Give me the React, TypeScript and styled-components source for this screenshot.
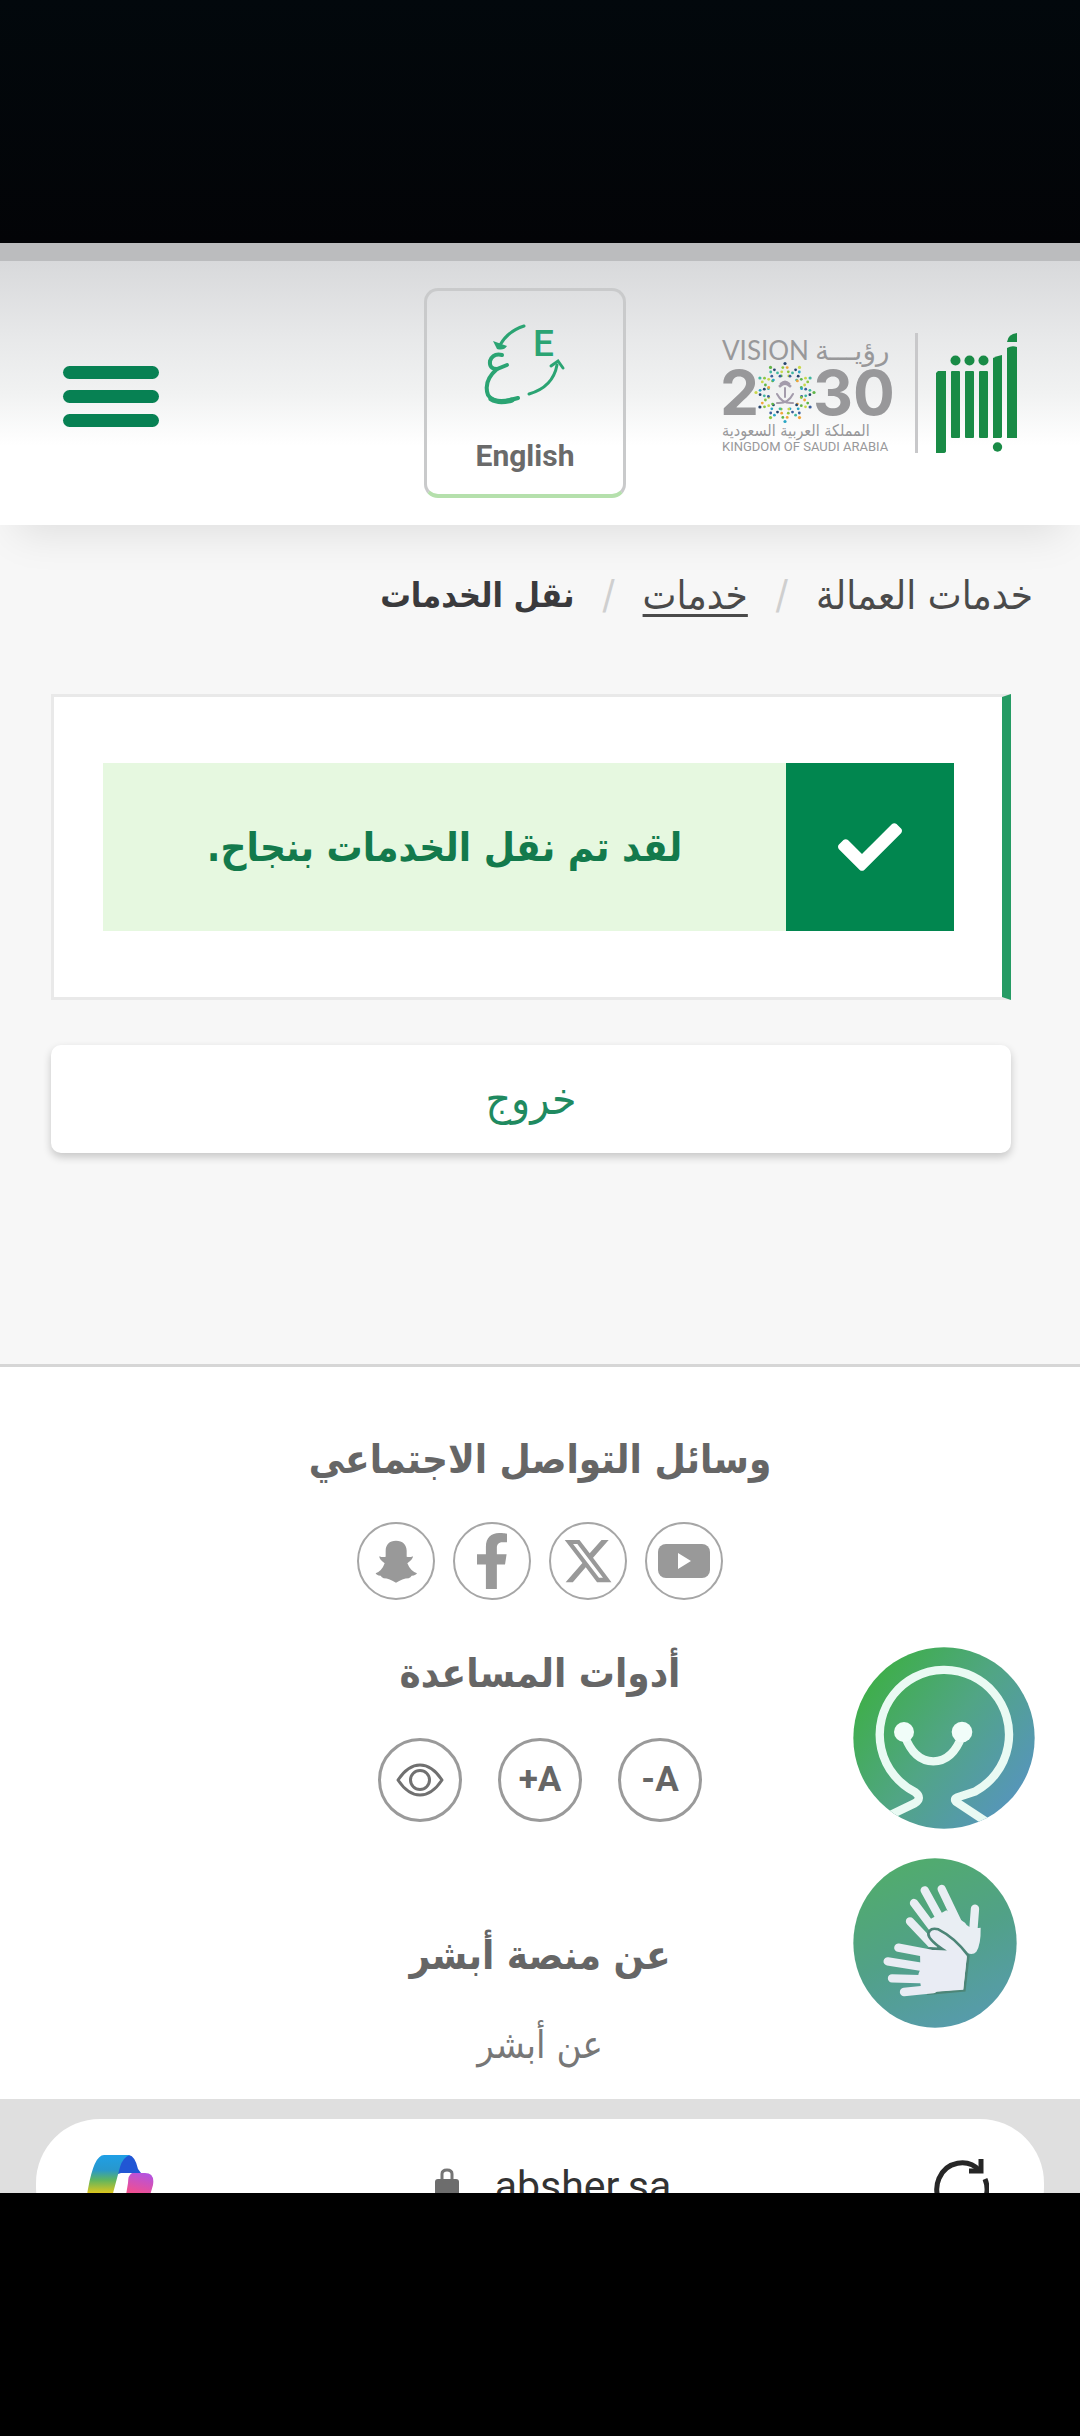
import React from "react";
import styled, { createGlobalStyle } from "styled-components";
import { FaCheck, FaFacebookF } from "react-icons/fa";
import { FaXTwitter } from "react-icons/fa6";

const GlobalStyle = createGlobalStyle`
  *, *::before, *::after { box-sizing: border-box; }
  html, body, #root { height: 100%; }
  body {
    margin: 0;
    background: #000;
    font-family: "DejaVu Sans Condensed", "DejaVu Sans", "Noto Sans", sans-serif;
  }
  button { font: inherit; color: inherit; background: none; border: 0; padding: 0; cursor: pointer; }
  a { color: inherit; text-decoration: none; }
  svg { display: block; }
`;

const Screen = styled.div`
  min-height: 100%;
  display: flex;
  flex-direction: column;
`;

const TopArea = styled.div`
  height: 243px;
  background: linear-gradient(#02080c, #030407);
`;

const StatusStrip = styled.div`
  height: 18px;
  background: #bbbcbe;
`;

const Header = styled.header`
  position: relative;
  display: grid;
  grid-template-columns: 1fr auto 1fr;
  align-items: center;
  height: 264px;
  padding: 0 61px 0 31px;
  background: linear-gradient(#d8d9db, #e8e9ea 30%, #f1f2f2 50%, #fff 70%);
  box-shadow: 0 24px 40px -16px rgba(0, 0, 0, 0.1);
`;

const Logos = styled.div`
  direction: rtl;
  justify-self: end;
  display: flex;
  align-items: center;
  gap: 17px;
`;

const Divider = styled.span`
  width: 3px;
  height: 120px;
  background: #c8c8ca;
`;

const LanguageButton = styled.button`
  display: flex;
  flex-direction: column;
  align-items: center;
  gap: 32px;
  width: 202px;
  height: 210px;
  padding-top: 32px;
  border: 3px solid #c9cacb;
  border-bottom: 4px solid #b5e0ac;
  border-radius: 14px;
  font: 700 30px/34px Roboto, sans-serif;
  color: #6a6a6a;
`;

const MenuButton = styled.button`
  justify-self: start;
  display: flex;
  flex-direction: column;
  gap: 11px;
  padding: 38px 32px 32px;
`;

const MenuBar = styled.span`
  width: 96px;
  height: 13px;
  border-radius: 7px;
  background: #078153;
`;

const Main = styled.main`
  flex: none;
  padding: 40px 69px 211px 51px;
  background: #f7f7f7;
`;

const Breadcrumb = styled.nav`
  display: flex;
  align-items: center;
  gap: 28px;
  height: 60px;
  margin: 0 -22px 69px 0;
  font-size: 40px;
  line-height: 60px;
  color: #4a4a4a;
`;

const CrumbLink = styled.a<{ $underlined?: boolean }>`
  text-decoration: ${(p) => (p.$underlined ? "underline" : "none")};
  text-decoration-thickness: 3px;
  text-underline-offset: 5px;
`;

const CrumbCurrent = styled.strong`
  font-size: 34px;
  color: #3a3a3c;
`;

const Slash = styled.span`
  color: #cfcfcf;
`;

const Card = styled.section`
  padding: 66px 48px 66px 49px;
  background: #fff;
  border: 3px solid #e9e9e9;
  border-right: 9px solid #259b64;
`;

const Notice = styled.div`
  display: flex;
  min-height: 168px;
  background: #e6f8e0;
`;

const NoticeIcon = styled.span`
  display: grid;
  place-items: center;
  width: 168px;
  background: #01864f;
  color: #fff;
`;

const NoticeText = styled.p`
  flex: 1;
  align-self: center;
  margin: 0;
  text-align: center;
  font-size: 40px;
  font-weight: 700;
  line-height: 60px;
  color: #137a4c;
`;

const ExitButton = styled.button`
  display: block;
  width: 100%;
  height: 108px;
  margin-top: 45px;
  border-radius: 10px;
  background: #fff;
  box-shadow: 0 4px 8px rgba(0, 0, 0, 0.2);
  font-size: 44px;
  line-height: 60px;
  color: #1f8a60;
`;

const Footer = styled.footer`
  position: relative;
  display: flex;
  flex-direction: column;
  align-items: center;
  height: 735px;
  padding-top: 62px;
  border-top: 3px solid #d6d6d6;
  background: #fff;
`;

const FooterTitle = styled.h2`
  margin: 0;
  font-size: 40px;
  font-weight: 700;
  line-height: 60px;
  color: #666;
`;

const Row = styled.div<{ $gap: number; $space: string }>`
  display: flex;
  gap: ${(p) => p.$gap}px;
  margin: ${(p) => p.$space};
`;

const SocialLink = styled.a`
  display: grid;
  place-items: center;
  width: 78px;
  height: 78px;
  border: 2px solid #a6a6a6;
  border-radius: 50%;
  color: #999;
`;

const ToolButton = styled.button`
  display: grid;
  place-items: center;
  width: 84px;
  height: 84px;
  border: 3px solid #9a9a9a;
  border-radius: 50%;
  font: 700 35px/40px Roboto, sans-serif;
  direction: ltr;
  color: #666;
`;

const FooterLink = styled.a`
  margin-top: 30px;
  font-size: 38px;
  line-height: 60px;
  color: #777;
`;

const FloatingTools = styled.aside`
  position: absolute;
  top: 280px;
  right: 45px;
  direction: ltr;
  display: flex;
  flex-direction: column;
  align-items: flex-start;
  gap: 29px;
`;

const BrowserBar = styled.div`
  direction: ltr;
  flex: none;
  height: 94px;
  padding: 20px 36px 0;
  overflow: hidden;
  background: #dfdfdf;
`;

const AddressPill = styled.div`
  display: flex;
  align-items: flex-start;
  justify-content: space-between;
  height: 132px;
  padding: 36px 55px 0 51px;
  border-radius: 64px;
  background: #fff;
`;

const Address = styled.button`
  display: flex;
  align-items: center;
  gap: 36px;
  margin-left: 18px;
  padding-top: 7px;
  font: 400 41px/48px Roboto, sans-serif;
  color: #333;
`;

const BottomArea = styled.div`
  flex: 1;
  background: #000;
`;

const EMBLEM_COLORS = ["#5fb548", "#2aa6c4", "#c8d84a", "#3b5f9c", "#8bc53f", "#3fb7a0", "#f0a63a", "#26456e"];

function Emblem() {
  const dots: React.ReactNode[] = [];
  for (let arm = 0; arm < 12; arm++) {
    for (let step = 0; step < 4; step++) {
      for (const side of step === 3 ? [0] : [-1, 1]) {
        const angle = ((arm * 30 + side * (13 - step * 4)) * Math.PI) / 180;
        const radius = 17 + step * 4;
        dots.push(
          <circle
            key={`${arm}-${step}-${side}`}
            cx={Math.round((85 + Math.sin(angle) * radius) * 10) / 10}
            cy={Math.round((92.5 - Math.cos(angle) * radius) * 10) / 10}
            r={step === 3 ? 1.6 : 1.4}
            fill={EMBLEM_COLORS[(arm * 3 + step * 2 + side + 1) % EMBLEM_COLORS.length]}
          />
        );
      }
    }
  }
  return (
    <g>
      {dots}
      <g stroke="#a39bab" strokeWidth="2" fill="none" strokeLinecap="round">
        <path d="M85 88V97M77 94Q82 104 93 103M93 94Q88 104 77 103" />
        <path d="M80 86Q85 81 90 86M81 84Q85 80 89 84" strokeWidth="3" />
      </g>
    </g>
  );
}

function VisionLogo() {
  return (
    <svg width="178" height="126" viewBox="20 30 178 126" role="img" aria-label="Vision 2030" direction="ltr">
      <g fill="#98989a">
        <text x="22" y="60" fontFamily="Lato, sans-serif" fontSize="26">VISION</text>
        <text x="115" y="60" fontFamily="DejaVu Sans, sans-serif" fontSize="28">رؤيـــة</text>
        <g fontFamily="Inter, sans-serif" fontWeight="700" fontSize="62">
          <text x="20" y="115">2</text>
          <text x="113" y="115">3</text>
          <text x="153" y="115">0</text>
        </g>
        <text x="22" y="136" fontFamily="DejaVu Sans Condensed, DejaVu Sans, sans-serif" fontSize="16">المملكة العربية السعودية</text>
        <text x="22" y="151" fontFamily="Roboto, sans-serif" fontSize="13">KINGDOM OF SAUDI ARABIA</text>
      </g>
      <Emblem />
    </svg>
  );
}

function AbsherLogo() {
  return (
    <svg width="84" height="124" viewBox="235 31 84 124" fill="#198b46" role="img" aria-label="أبشر">
      <path d="M238 71H246V151Q246 153 243 153H236V73Z" />
      <rect x="251" y="71" width="9" height="67" rx="1" />
      <rect x="265" y="71" width="9" height="67" rx="1" />
      <rect x="279" y="71" width="9" height="67" rx="1" />
      <path d="M293 58Q297 56 302 55V137L301 138H293Z" />
      <path d="M307 48Q312 45 317 47V138H307Z" />
      <path d="M307 42Q308 34 317 33V42Z" />
      <circle cx="255.5" cy="60.5" r="5" />
      <circle cx="269.5" cy="60.5" r="5" />
      <circle cx="283.5" cy="60.5" r="5" />
      <circle cx="297.5" cy="147" r="4.7" />
    </svg>
  );
}

function LanguageIcon() {
  return (
    <svg width="84" height="84" viewBox="0 0 84 84" aria-hidden="true">
      <g fill="none" stroke="#2ba473" strokeWidth="3" strokeLinecap="round">
        <path d="M41 3Q25 8 17 22" />
        <path d="M46 71Q70 64 74 42" />
        <path d="M68 43L75 38L80 45" />
      </g>
      <path d="M10 18L24 23Q21 28 14 26Z" fill="#2ba473" />
      <text x="50" y="33" fill="#2ba473" fontFamily="Roboto, sans-serif" fontSize="37" fontWeight="500">E</text>
      <g fill="none" stroke="#2ba473" strokeLinecap="round">
        <path d="M19 32Q10 30 7 38Q6 46 14 46L24 42" strokeWidth="4" />
        <path d="M14 46Q0 58 5 72Q11 82 35 75" strokeWidth="4" />
        <path d="M8 76Q16 81 29 77" strokeWidth="5" />
      </g>
    </svg>
  );
}

function YoutubeIcon() {
  return (
    <svg width="52" height="34" viewBox="0 0 52 34" aria-hidden="true">
      <rect width="52" height="34" rx="8" fill="#999" />
      <path d="M20 9L33 17L20 25Z" fill="#fff" />
    </svg>
  );
}

function SnapchatIcon() {
  return (
    <svg width="42" height="43" viewBox="285 598 126 128" fill="#999" aria-hidden="true">
      <path d="M348 600C328 600 317 612 317 630V648Q307 650 298 646Q297 655 314 667Q306 690 287 697Q288 702 302 705Q305 710 311 712Q329 712 348 726Q367 712 386 712Q392 710 395 705Q409 702 411 697Q391 690 382 667Q399 655 399 646Q390 650 380 648V630C380 612 368 600 348 600Z" />
    </svg>
  );
}

function EyeIcon() {
  return (
    <svg width="48" height="34" viewBox="0 0 48 34" fill="none" stroke="#707070" strokeWidth="3" aria-hidden="true">
      <path d="M2 17Q12 2 24 2T46 17Q36 32 24 32T2 17Z" strokeLinejoin="round" />
      <circle cx="24" cy="17" r="9.5" />
    </svg>
  );
}

function AssistantIcon() {
  return (
    <svg width="182" height="182" viewBox="99 79 546 546" aria-hidden="true">
      <defs>
        <linearGradient id="assistant" x1="0.1" y1="0.2" x2="0.9" y2="0.8">
          <stop offset="0" stopColor="#3fae4c" />
          <stop offset="0.5" stopColor="#51a585" />
          <stop offset="1" stopColor="#5696b8" />
        </linearGradient>
        <clipPath id="disc"><circle cx="372" cy="352" r="272" /></clipPath>
      </defs>
      <circle cx="372" cy="352" r="272" fill="url(#assistant)" />
      <g clipPath="url(#disc)" fill="none" stroke="#e9faf3" strokeWidth="25">
        <path d="M205 586L284 548Q308 532 286 515A194 194 0 1 1 466 512L412 530Q398 536 412 546L500 604" />
        <path d="M254 345Q282 422 340 422Q398 422 426 345" />
      </g>
      <circle cx="252" cy="334" r="30" fill="#f1fdf9" />
      <circle cx="426" cy="334" r="31" fill="#f1fdf9" />
    </svg>
  );
}

function SignLanguageIcon() {
  return (
    <svg width="164" height="170" viewBox="104 711 492 510" aria-hidden="true">
      <defs>
        <linearGradient id="sign" x1="0.3" y1="0" x2="0.7" y2="1">
          <stop offset="0" stopColor="#51ac6c" />
          <stop offset="0.5" stopColor="#51a187" />
          <stop offset="1" stopColor="#579bad" />
        </linearGradient>
      </defs>
      <ellipse cx="350" cy="966" rx="245" ry="254" fill="url(#sign)" />
      <g stroke="#e9eef3" strokeWidth="25" strokeLinecap="round" fill="none">
        <path d="M370 804L428 925M319 808L378 915M287 846L350 930M275 901L345 975M470 863L464 940" />
      </g>
      <path d="M338 893L384 868L440 905Q450 925 487 920Q488 970 474 992Q465 1003 448 997L380 975L330 960Z" fill="#e9eef3" />
      <path d="M372 984Q330 955 330 938Q335 918 360 925Q410 950 450 1004L438 1108L330 1118L310 1000L335 982Z" fill="#e9ecf4" stroke="#4c8577" strokeWidth="8" />
      <g stroke="#e9ecf4" strokeWidth="25" strokeLinecap="round" fill="none">
        <path d="M240 980L335 998M208 1021L325 1040M221 1072L330 1075M257 1113L345 1104" />
      </g>
      <path d="M305 992L368 992L445 1008L435 1106L310 1115L306 1085L300 1060L306 1045Z" fill="#e9ecf4" />
    </svg>
  );
}

function CopilotIcon() {
  return (
    <svg width="68" height="60" viewBox="0 0 68 60" aria-hidden="true">
      <defs>
        <linearGradient id="ribbon" x1="0" y1="0" x2="0" y2="1">
          <stop offset="0" stopColor="#1f9fe6" />
          <stop offset="0.3" stopColor="#2898cc" />
          <stop offset="0.5" stopColor="#5fb560" />
          <stop offset="0.75" stopColor="#d8c520" />
        </linearGradient>
        <linearGradient id="petal" x1="0.6" y1="0" x2="0.4" y2="1">
          <stop offset="0" stopColor="#b553dd" />
          <stop offset="0.5" stopColor="#ee4f94" />
          <stop offset="1" stopColor="#f76b5e" />
        </linearGradient>
      </defs>
      <path d="M34 0H42Q48 1 51 14L54 18H34L28 20Z" fill="#2156d4" />
      <path d="M17 0H43Q36 2 33 12L25 42Q22 50 14 50H6Q-2 48 1 34Q7 0 17 0Z" fill="url(#ribbon)" />
      <path d="M43 18H58Q68 18 66 30L58 58H36L41 28Q41 20 45 18Z" fill="url(#petal)" />
    </svg>
  );
}

function LockIcon() {
  return (
    <svg width="24" height="36" viewBox="0 0 24 36" aria-hidden="true">
      <path d="M7 12V6Q7 2 12 2T17 6V12" fill="none" stroke="#757575" strokeWidth="3" />
      <rect y="11" width="24" height="24" rx="3" fill="#6d6d6d" />
    </svg>
  );
}

function ReloadIcon() {
  return (
    <svg width="56" height="60" viewBox="0 0 56 60" fill="none" stroke="#262626" strokeWidth="5" aria-hidden="true">
      <path d="M47 16A25 26 0 1 0 52 24" />
      <path d="M48 4V16H36" />
    </svg>
  );
}

export default function App() {
  return (
    <>
      <GlobalStyle />
      <Screen dir="rtl" lang="ar">
        <TopArea />
        <StatusStrip />
        <Header dir="ltr">
          <MenuButton aria-label="القائمة">
            <MenuBar />
            <MenuBar />
            <MenuBar />
          </MenuButton>
          <LanguageButton lang="en">
            <LanguageIcon />
            English
          </LanguageButton>
          <Logos>
            <AbsherLogo />
            <Divider />
            <VisionLogo />
          </Logos>
        </Header>

        <Main>
          <Breadcrumb>
            <CrumbLink href="#labor">خدمات العمالة</CrumbLink>
            <Slash>/</Slash>
            <CrumbLink href="#services" $underlined>خدمات</CrumbLink>
            <Slash>/</Slash>
            <CrumbCurrent>نقل الخدمات</CrumbCurrent>
          </Breadcrumb>
          <Card>
            <Notice role="status">
              <NoticeIcon>
                <FaCheck size={64} />
              </NoticeIcon>
              <NoticeText>لقد تم نقل الخدمات بنجاح.</NoticeText>
            </Notice>
          </Card>
          <ExitButton>خروج</ExitButton>
        </Main>

        <Footer>
          <FooterTitle>وسائل التواصل الاجتماعي</FooterTitle>
          <Row $gap={18} $space="33px 0 43px">
            <SocialLink href="#youtube" aria-label="YouTube"><YoutubeIcon /></SocialLink>
            <SocialLink href="#x" aria-label="X"><FaXTwitter size={52} /></SocialLink>
            <SocialLink href="#facebook" aria-label="Facebook"><FaFacebookF size={56} /></SocialLink>
            <SocialLink href="#snapchat" aria-label="Snapchat"><SnapchatIcon /></SocialLink>
          </Row>
          <FooterTitle>أدوات المساعدة</FooterTitle>
          <Row $gap={36} $space="35px 0 103px">
            <ToolButton>-A</ToolButton>
            <ToolButton>+A</ToolButton>
            <ToolButton aria-label="عرض"><EyeIcon /></ToolButton>
          </Row>
          <FooterTitle>عن منصة أبشر</FooterTitle>
          <FooterLink href="#about">عن أبشر</FooterLink>
          <FloatingTools>
            <button aria-label="المساعد"><AssistantIcon /></button>
            <button aria-label="لغة الإشارة"><SignLanguageIcon /></button>
          </FloatingTools>
        </Footer>

        <BrowserBar>
          <AddressPill>
            <button aria-label="Copilot"><CopilotIcon /></button>
            <Address>
              <LockIcon />
              absher.sa
            </Address>
            <button aria-label="Reload"><ReloadIcon /></button>
          </AddressPill>
        </BrowserBar>
        <BottomArea />
      </Screen>
    </>
  );
}
